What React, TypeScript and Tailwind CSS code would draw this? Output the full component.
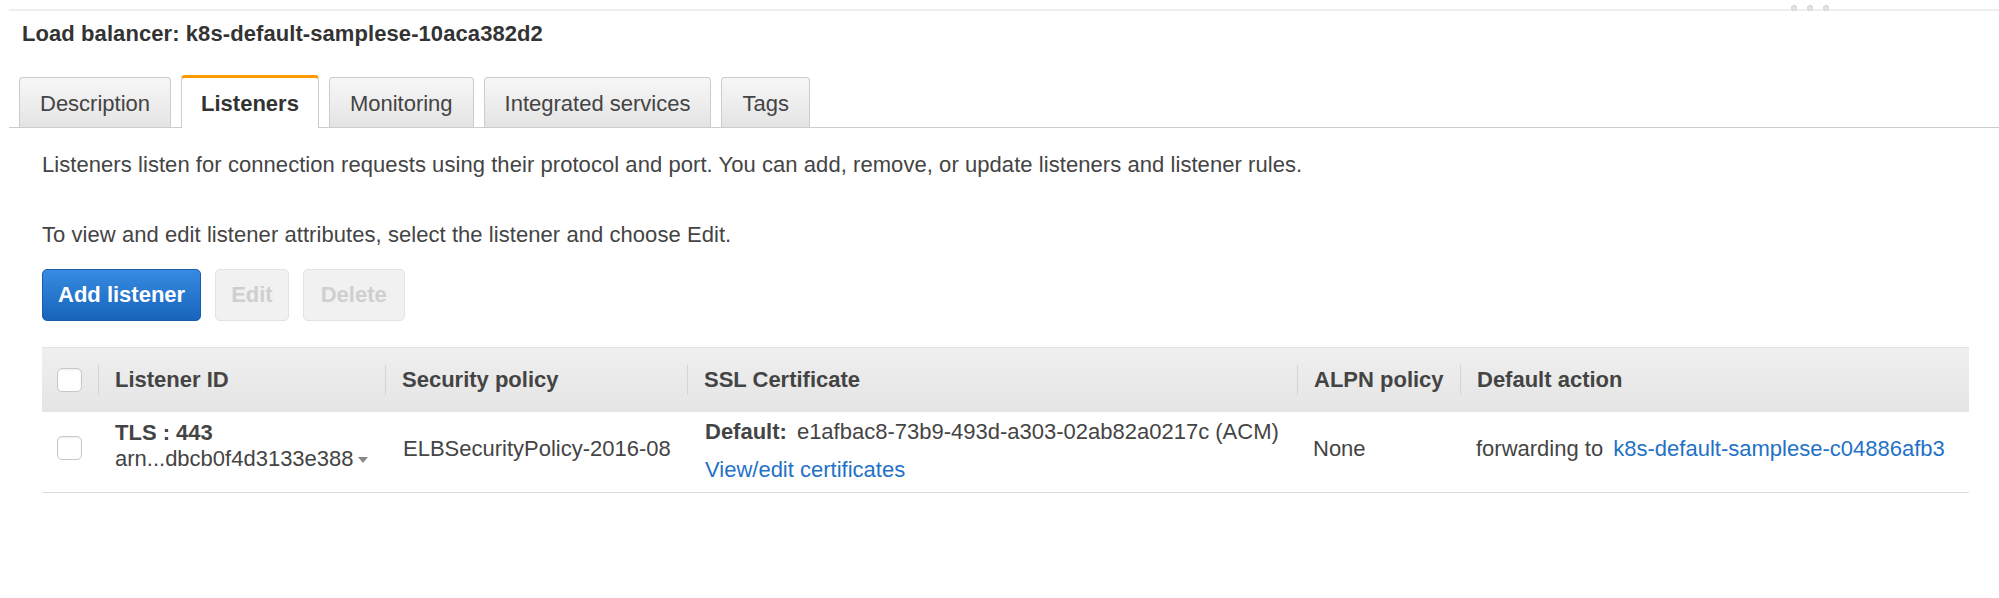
import { ReactNode } from "react"

const tabs = ["Description", "Listeners", "Monitoring", "Integrated services", "Tags"]

const Tab = ({ label, active }: { label: string; active?: boolean }) => {
    if (active) {
        return (
            <div className="-mb-px h-[53px] px-[19px] pt-[2px] flex items-center rounded-t-[4px] border border-b-0 border-[#cccccc] border-t-[3px] border-t-[#ff9900] bg-white font-bold text-[#333333]">
                {label}
            </div>
        )
    }
    return (
        <div className="h-[50px] px-[20px] pt-[3px] flex items-center rounded-t-[4px] border border-b-0 border-[#cccccc] bg-gradient-to-b from-[#f7f7f7] to-[#e4e4e4] text-[#444444]">
            {label}
        </div>
    )
}

const Checkbox = () => (
    <div className="w-[25px] h-[24px] rounded-[5px] border border-[#c8c8c8] bg-white shadow-[inset_0_1px_2px_rgba(0,0,0,0.08)]" />
)

const HeadCell = ({ children }: { children: ReactNode }) => (
    <div className="flex items-center h-full">
        <div className="w-px h-[30px] bg-[#d4d4d4]" />
        <div className="pl-[16px] font-bold text-[#444444]">{children}</div>
    </div>
)

export default function App() {
    return (
        <div className="w-full h-[598px] bg-white text-[22px] leading-[30px] text-[#444444] font-['Liberation_Sans',Arial,sans-serif]">
            {/* top divider with resize handle */}
            <div className="relative ml-[9px] pt-[9px]">
                <div className="h-[2px] bg-[#eeeeee]" />
                <div className="absolute top-[5px] left-[1782px] flex gap-[10px]">
                    <span className="w-[6px] h-[6px] rounded-full border border-[#cfcfcf] bg-[#e6e6e6]" />
                    <span className="w-[6px] h-[6px] rounded-full border border-[#cfcfcf] bg-[#e6e6e6]" />
                    <span className="w-[6px] h-[6px] rounded-full border border-[#cfcfcf] bg-[#e6e6e6]" />
                </div>
            </div>

            <h1 className="mt-[10px] pl-[22px] font-bold text-[#333333] leading-[26px] tracking-[0.08px]">
                Load balancer: k8s-default-samplese-10aca382d2
            </h1>

            <div className="mt-[28px] ml-[9px] pl-[10px] flex items-end gap-[10px] border-b border-[#cccccc]">
                {tabs.map((t) => (
                    <Tab key={t} label={t} active={t === "Listeners"} />
                ))}
            </div>

            <div className="pl-[42px] pr-[30px]">
                <p className="mt-[22px] tracking-[0.06px]">
                    Listeners listen for connection requests using their protocol and port. You can add, remove, or update listeners and listener rules.
                </p>
                <p className="mt-[40px] tracking-[0.06px]">To view and edit listener attributes, select the listener and choose Edit.</p>

                <div className="mt-[19px] flex gap-[14px]">
                    <button className="h-[52px] px-[15px] rounded-[5px] border border-[#1a5ca6] bg-gradient-to-b from-[#378be2] to-[#1764bb] text-white font-bold">
                        Add listener
                    </button>
                    <button className="h-[52px] px-[15px] rounded-[5px] border border-[#e2e2e2] bg-[#f1f1f1] text-[#cfcfcf] font-bold">
                        Edit
                    </button>
                    <button className="h-[52px] px-[17px] rounded-[5px] border border-[#e2e2e2] bg-[#f1f1f1] text-[#cfcfcf] font-bold">
                        Delete
                    </button>
                </div>

                <div className="mt-[26px] w-[1927px]">
                    <div className="grid grid-cols-[56px_287px_302px_610px_163px_1fr] h-[65px] items-center bg-gradient-to-b from-[#efefef] to-[#e5e5e5] border-t border-[#e2e2e2]">
                        <div className="pl-[15px] flex items-center">
                            <Checkbox />
                        </div>
                        <HeadCell>Listener ID</HeadCell>
                        <HeadCell>Security policy</HeadCell>
                        <HeadCell>SSL Certificate</HeadCell>
                        <HeadCell>ALPN policy</HeadCell>
                        <HeadCell>Default action</HeadCell>
                    </div>

                    <div className="grid grid-cols-[56px_287px_302px_610px_163px_1fr] h-[81px] items-start border-b border-[#dddddd]">
                        <div className="pl-[15px] pt-[24px]">
                            <Checkbox />
                        </div>
                        <div className="pl-[17px] pt-[9px] flex flex-col">
                            <span className="font-bold leading-[24px]">TLS : 443</span>
                            <span className="mt-[2px] flex items-center leading-[24px]">
                                arn...dbcb0f4d3133e388
                                <svg width="10" height="6" viewBox="0 0 10 6" className="ml-[4px] mt-[2px]">
                                    <path d="M0 0 L10 0 L5 6 Z" fill="#888888" />
                                </svg>
                            </span>
                        </div>
                        <div className="pl-[18px] pt-[22px]">ELBSecurityPolicy-2016-08</div>
                        <div className="pl-[18px] pt-[5px] flex flex-col">
                            <span className="leading-[30px]">
                                <span className="font-bold">Default:</span>
                                <span className="ml-[10px]">e1afbac8-73b9-493d-a303-02ab82a0217c (ACM)</span>
                            </span>
                            <a className="mt-[8px] leading-[30px] text-[#1f72c6]">View/edit certificates</a>
                        </div>
                        <div className="pl-[16px] pt-[22px]">None</div>
                        <div className="pl-[16px] pt-[22px]">
                            forwarding to <a className="ml-[4px] text-[#1f72c6]">k8s-default-samplese-c04886afb3</a>
                        </div>
                    </div>
                </div>
            </div>
        </div>
    )
}
